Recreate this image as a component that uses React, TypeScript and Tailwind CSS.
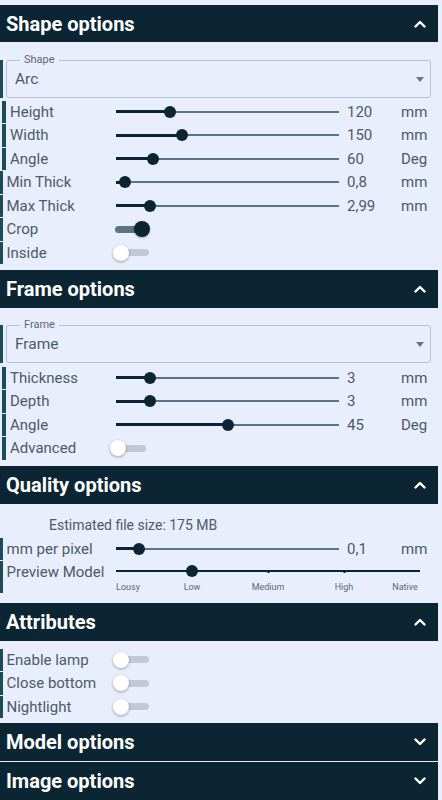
import React from "react";

const font = { fontFamily: "Roboto, 'Noto Sans', sans-serif" };

function Chevron({ up }: { up: boolean }) {
  return (
    <svg width="12" height="8" viewBox="0 0 12 8" className="block">
      <polyline
        points={up ? "1.5,6.5 6,2 10.5,6.5" : "1.5,1.5 6,6 10.5,1.5"}
        fill="none"
        stroke="#ffffff"
        strokeWidth="2.4"
        strokeLinecap="round"
        strokeLinejoin="round"
      />
    </svg>
  );
}

function Header({ title, open, tall }: { title: string; open: boolean; tall?: boolean }) {
  return (
    <div
      className={
        (tall ? "h-[38px] " : "h-[37px] ") +
        "mr-[4px] bg-[#0b2632] flex items-center justify-between pl-[6px] pr-[12px]"
      }
    >
      <span className="text-white font-bold text-[20px] leading-none">{title}</span>
      <Chevron up={open} />
    </div>
  );
}

function Bar({ indent }: { indent?: boolean }) {
  return (
    <div
      className={
        indent
          ? "ml-[2px] w-[4px] self-stretch my-[0.5px] bg-[#1b4d59]"
          : "w-[2.5px] self-stretch my-[0.5px] bg-[#1b4d59]"
      }
    />
  );
}

function Row({
  label,
  indent,
  children,
}: {
  label: string;
  indent?: boolean;
  children?: React.ReactNode;
}) {
  return (
    <div className="flex items-center h-[23.5px]">
      <Bar indent={indent} />
      <div
        className={
          indent
            ? "w-[110px] pl-[4px] text-[15px] text-[#4f5967] whitespace-nowrap"
            : "w-[113.5px] pl-[4px] text-[15px] text-[#4f5967] whitespace-nowrap"
        }
      >
        {label}
      </div>
      {children}
    </div>
  );
}

function Slider({ offset, width }: { offset: number; width: number }) {
  return (
    <div className="relative h-[12px] shrink-0" style={{ width }}>
      <div className="absolute left-0 right-0 top-[5px] h-[2px] bg-[#5a7581]" />
      <div className="absolute left-0 top-[4.5px] h-[3px] bg-[#0b2632]" style={{ width: offset }} />
      <div
        className="absolute top-0 w-[12px] h-[12px] rounded-full bg-[#0b2632]"
        style={{ left: offset - 6 }}
      />
    </div>
  );
}

function SliderRow({
  label,
  indent,
  offset,
  value,
  unit,
}: {
  label: string;
  indent?: boolean;
  offset: number;
  value: string;
  unit: string;
}) {
  return (
    <Row label={label} indent={indent}>
      <Slider offset={offset} width={223} />
      <div className="ml-[8px] w-[54px] text-[15px] text-[#4f5967]">{value}</div>
      <div className="text-[15px] text-[#4f5967]">{unit}</div>
    </Row>
  );
}

function Switch({ on, shift }: { on?: boolean; shift?: boolean }) {
  return (
    <div className={(shift ? "ml-[-6px] " : "ml-[-3px] ") + "relative w-[37px] h-[16px]"}>
      <div
        className={
          on
            ? "absolute left-[2px] right-[1px] top-[4.5px] h-[7px] rounded-full bg-[#5a7581]"
            : "absolute left-[2px] right-[1px] top-[4.5px] h-[7px] rounded-full bg-[#c3c9d2]"
        }
      />
      <div
        className={
          on
            ? "absolute right-0 top-0 w-[16px] h-[16px] rounded-full bg-[#0b2632] shadow-[0_1px_2px_rgba(0,0,0,0.3)]"
            : "absolute left-0 top-0 w-[16px] h-[16px] rounded-full bg-white shadow-[0_1px_3px_rgba(0,0,0,0.35)]"
        }
      />
    </div>
  );
}

function Select({ legend, value }: { legend: string; value: string }) {
  return (
    <div className="flex h-[38px]">
      <div className="w-[2.5px] bg-[#1b4d59]" />
      <div className="relative ml-[3.5px] w-[425px] h-[38px] border border-[#b8c0cb] rounded-[3px] flex items-center justify-between pl-[8px] pr-[6px]">
        <span className="absolute left-[13px] top-[-7px] px-[4px] bg-[#e8eefb] text-[11px] leading-[12px] text-[#5d6875]">
          {legend}
        </span>
        <span className="text-[15.5px] text-[#4f5967] pt-[2px]">{value}</span>
        <svg width="8" height="5" viewBox="0 0 8 5">
          <polygon points="0,0 8,0 4,5" fill="#6b7480" />
        </svg>
      </div>
    </div>
  );
}

export default function App() {
  const ticks = [
    { l: "Lousy", x: 12 },
    { l: "Low", x: 76 },
    { l: "Medium", x: 152 },
    { l: "High", x: 228 },
    { l: "Native", x: 289 },
  ];
  return (
    <div className="w-[442px] min-h-[800px] bg-[#e8eefb] pt-[5px]" style={font}>
      {/* Shape options */}
      <Header title="Shape options" open />
      <div className="pt-[18px] pb-[5.5px]">
        <Select legend="Shape" value="Arc" />
        <div className="mt-[2px]">
          <SliderRow label="Height" indent offset={54} value="120" unit="mm" />
          <SliderRow label="Width" indent offset={66} value="150" unit="mm" />
          <SliderRow label="Angle" indent offset={37} value="60" unit="Deg" />
          <SliderRow label="Min Thick" offset={9} value="0,8" unit="mm" />
          <SliderRow label="Max Thick" offset={34} value="2,99" unit="mm" />
          <Row label="Crop">
            <Switch on />
          </Row>
          <Row label="Inside">
            <Switch />
          </Row>
        </div>
      </div>

      {/* Frame options */}
      <Header title="Frame options" open tall />
      <div className="pt-[17px] pb-[6px]">
        <Select legend="Frame" value="Frame" />
        <div className="mt-[3px]">
          <SliderRow label="Thickness" indent offset={34} value="3" unit="mm" />
          <SliderRow label="Depth" indent offset={34} value="3" unit="mm" />
          <SliderRow label="Angle" indent offset={112} value="45" unit="Deg" />
          <Row label="Advanced" indent>
            <Switch shift />
          </Row>
        </div>
      </div>

      {/* Quality options */}
      <Header title="Quality options" open tall />
      <div className="pt-[13px] pb-[9.5px]">
        <div className="pl-[49px] text-[14px] leading-[16px] text-[#4f5967]">
          Estimated file size: 175 MB
        </div>
        <div className="mt-[4px]">
          <SliderRow label="mm per pixel" offset={23} value="0,1" unit="mm" />
          <div className="flex h-[33px]">
            <Bar />
            <div className="w-[113.5px] pl-[4px] h-[23.5px] flex items-center text-[15px] text-[#4f5967] whitespace-nowrap">
              Preview Model
            </div>
            <div className="w-[304px]">
              <div className="h-[21px] flex items-center">
                <div className="relative w-[304px] h-[12px]">
                  <div className="absolute left-0 right-0 top-[5px] h-[2px] bg-[#0b2632]" />
                  <div className="absolute left-[151px] top-[4.5px] w-[3px] h-[3px] rounded-full bg-[#0b2632]" />
                  <div className="absolute left-[227px] top-[4.5px] w-[3px] h-[3px] rounded-full bg-[#0b2632]" />
                  <div className="absolute left-[70px] top-0 w-[12px] h-[12px] rounded-full bg-[#0b2632]" />
                </div>
              </div>
              <div className="relative h-[11px]">
                {ticks.map((t) => (
                  <span
                    key={t.l}
                    className="absolute top-0 -translate-x-1/2 text-[9px] leading-[11px] text-[#5d6875] whitespace-nowrap"
                    style={{ left: t.x }}
                  >
                    {t.l}
                  </span>
                ))}
              </div>
            </div>
          </div>
        </div>
      </div>

      {/* Attributes */}
      <Header title="Attributes" open tall />
      <div className="pt-[7px] pb-[4.5px]">
        <Row label="Enable lamp">
          <Switch />
        </Row>
        <Row label="Close bottom">
          <Switch />
        </Row>
        <Row label="Nightlight">
          <Switch />
        </Row>
      </div>

      <Header title="Model options" open={false} tall />
      <div className="h-[1px]" />
      <Header title="Image options" open={false} tall />
    </div>
  );
}
